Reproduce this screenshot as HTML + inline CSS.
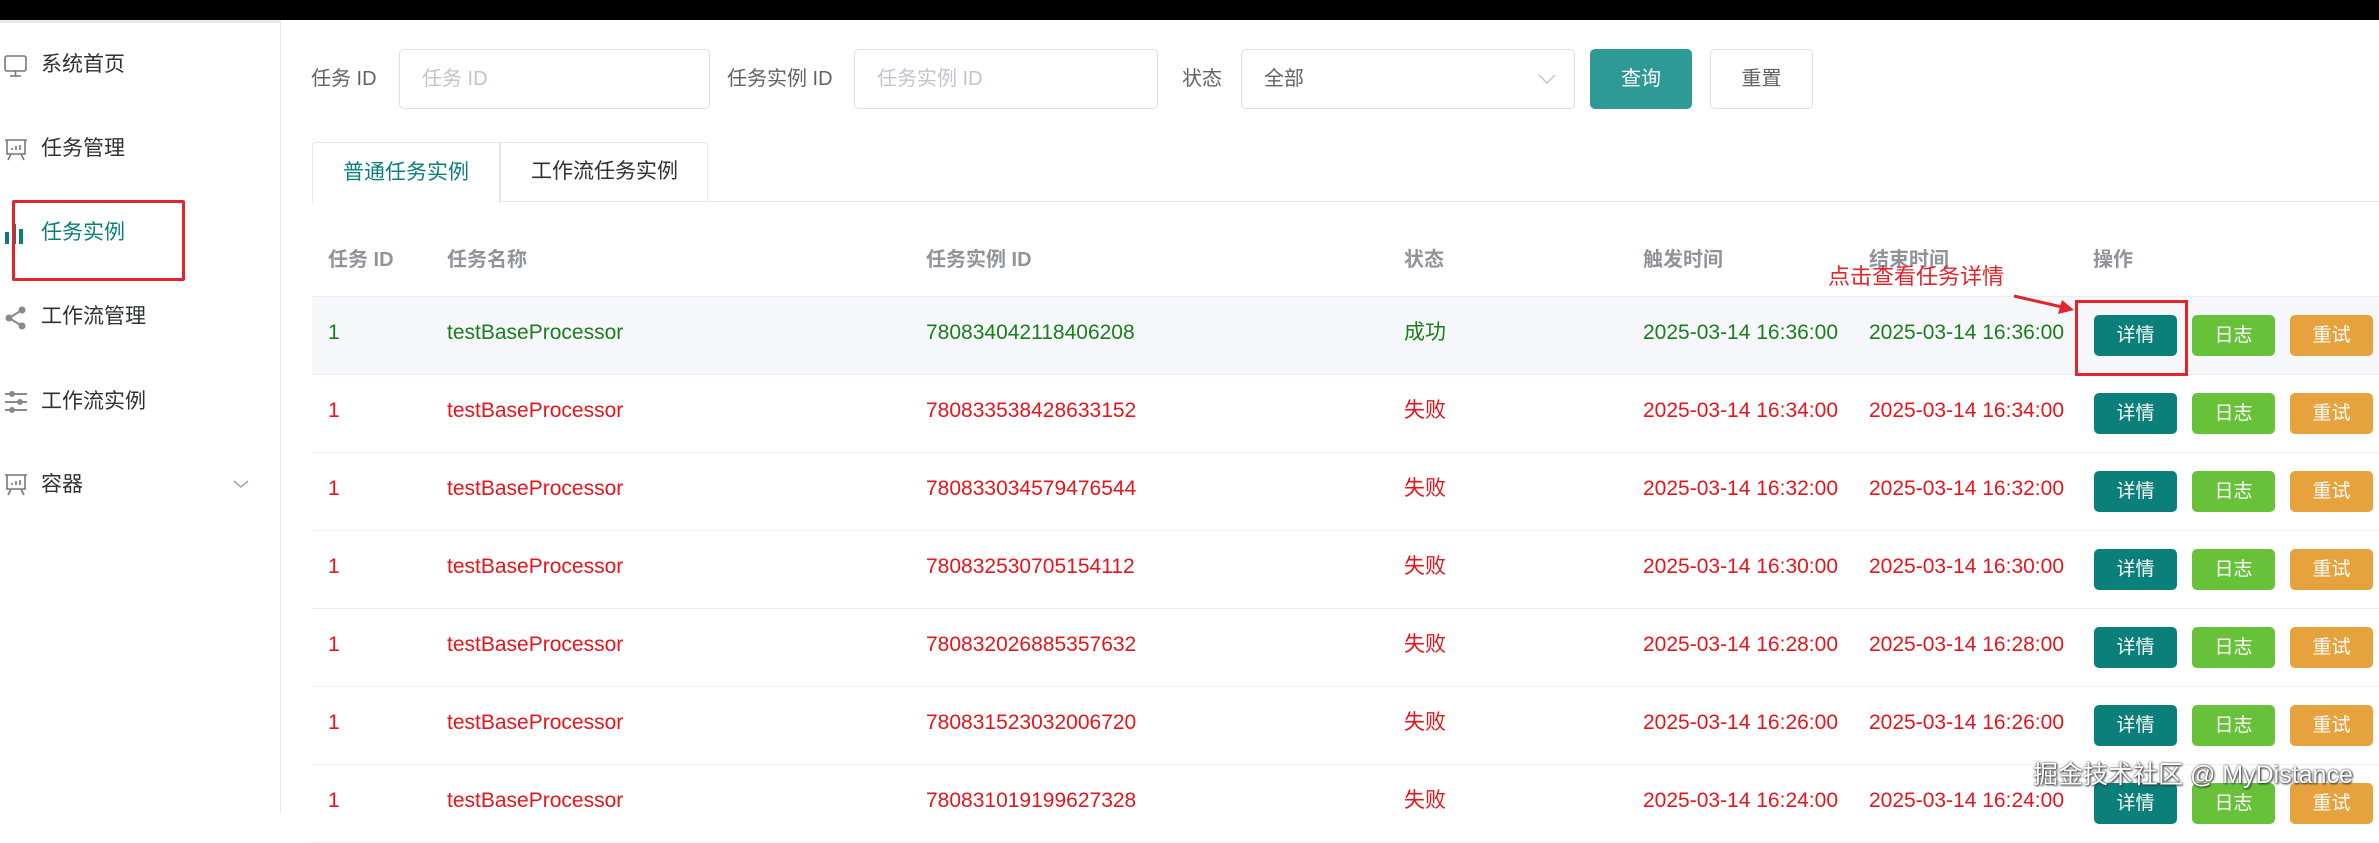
<!DOCTYPE html>
<html><head><meta charset="utf-8"><style>
*{margin:0;padding:0;box-sizing:border-box}
body{width:2379px;height:812px;overflow:hidden;background:#fff;font-family:"Liberation Sans","Noto Sans CJK SC",sans-serif;position:relative;color:#606266}
.a{position:absolute}
.top{left:0;top:0;width:2379px;height:20px;background:#000}
.side{left:0;top:20px;width:281px;height:792px;border-right:1px solid #e6e6e6;background:#fff}
.sidebar-top{left:0;top:20px;width:281px;height:3px;background:#e8e8e8}
.mi{left:41px;font-size:21px;color:#303133;line-height:30px}
.ic{left:3px}
.lbl{font-size:20px;color:#606266;line-height:30px}
.inp{border:1px solid #dcdfe6;border-radius:5px;height:60px;top:49px;font-size:20px;color:#c0c4cc;line-height:58px;padding-left:22px}
.btn{border-radius:5px;color:#fff;font-size:19px;text-align:center;line-height:41px;height:41px;width:83px}
.d{background:#0b7f7a}.l{background:#67c23a}.r{background:#e6a23c}
.th{top:245px;font-size:20px;font-weight:bold;color:#909399;line-height:30px}
.row{left:312px;width:2067px;height:78px;border-bottom:1px solid #ebeef5}
.c{font-size:21px;line-height:30px}
.g{color:#1b7d1b}.rd{color:#e8141c}
</style></head><body>
<div class="a top"></div>
<div class="a side"></div>
<div class="a sidebar-top"></div>

<!-- sidebar -->
<svg class="a ic" style="top:53px" width="26" height="26" viewBox="0 0 26 26" fill="none" stroke="#777" stroke-width="1.6"><rect x="2" y="3" width="21" height="15" rx="2"/><path d="M12.5 18v5M7 23h11"/></svg>
<div class="a mi" style="top:50px">系统首页</div>
<svg class="a ic" style="top:137px" width="26" height="26" viewBox="0 0 26 26" fill="none" stroke="#777" stroke-width="1.6"><path d="M2 3h22M4 3v14h18V3M8 17l-3 6M18 17l3 6M9 13v-2M13 13v-4M17 13v-5"/></svg>
<div class="a mi" style="top:134px">任务管理</div>
<svg class="a ic" style="top:221px" width="26" height="26" viewBox="0 0 26 26"><rect x="2" y="11" width="4" height="12" fill="#0b7f7a"/><rect x="9" y="3" width="4" height="20" fill="#0b7f7a"/><rect x="16" y="8" width="4" height="15" fill="#0b7f7a"/></svg>
<div class="a mi" style="top:218px;color:#0b7f7a">任务实例</div>
<div class="a" style="left:12px;top:200px;width:173px;height:81px;border:3px solid #e3242b;border-radius:2px"></div>
<svg class="a ic" style="top:305px" width="26" height="26" viewBox="0 0 26 26" fill="#888"><circle cx="19" cy="5" r="3.5"/><circle cx="6" cy="13" r="3.5"/><circle cx="19" cy="21" r="3.5"/><path d="M19 5L6 13l13 8" stroke="#888" stroke-width="2" fill="none"/></svg>
<div class="a mi" style="top:302px">工作流管理</div>
<svg class="a ic" style="top:389px" width="26" height="26" viewBox="0 0 26 26" stroke="#888" stroke-width="2" fill="#888"><path d="M2 5h22M2 13h22M2 21h22"/><circle cx="9" cy="5" r="2"/><circle cx="17" cy="13" r="2"/><circle cx="9" cy="21" r="2"/></svg>
<div class="a mi" style="top:387px">工作流实例</div>
<svg class="a ic" style="top:472px" width="26" height="26" viewBox="0 0 26 26" fill="none" stroke="#777" stroke-width="1.6"><path d="M2 3h22M4 3v14h18V3M8 17l-3 6M18 17l3 6M9 13v-2M13 13v-4M17 13v-5"/></svg>
<div class="a mi" style="top:470px">容器</div>
<svg class="a" style="left:233px;top:478px" width="16" height="12" viewBox="0 0 16 12" fill="none" stroke="#999" stroke-width="1.4"><path d="M1 3l7 6 7-6"/></svg>

<!-- form -->
<div class="a lbl" style="left:311px;top:64px">任务 ID</div>
<div class="a inp" style="left:399px;width:311px">任务 ID</div>
<div class="a lbl" style="left:727px;top:64px">任务实例 ID</div>
<div class="a inp" style="left:854px;width:304px">任务实例 ID</div>
<div class="a lbl" style="left:1182px;top:64px">状态</div>
<div class="a inp" style="left:1241px;width:334px;color:#606266">全部</div>
<svg class="a" style="left:1538px;top:72px" width="18" height="14" viewBox="0 0 18 14" fill="none" stroke="#c0c4cc" stroke-width="1.4"><path d="M1 3l8 8 8-8"/></svg>
<div class="a" style="left:1590px;top:49px;width:102px;height:60px;border-radius:5px;background:#2e9a95;color:#fff;font-size:20px;text-align:center;line-height:60px">查询</div>
<div class="a" style="left:1710px;top:49px;width:103px;height:60px;border-radius:5px;border:1px solid #dcdfe6;color:#606266;font-size:20px;text-align:center;line-height:58px">重置</div>

<!-- tabs -->
<div class="a" style="left:312px;top:201px;width:2067px;height:1px;background:#e4e7ed"></div>
<div class="a" style="left:312px;top:142px;width:396px;height:60px;border:1px solid #e4e7ed;border-bottom:none;border-radius:4px 4px 0 0"></div>
<div class="a" style="left:312px;top:142px;width:188px;height:61px;background:#fff;border:1px solid #e4e7ed;border-bottom:none;border-radius:4px 0 0 0;color:#0b7f7a;font-size:21px;text-align:center;line-height:60px">普通任务实例</div>
<div class="a" style="left:500px;top:142px;width:208px;height:60px;border-left:1px solid #e4e7ed;color:#303133;font-size:21px;text-align:center;line-height:60px">工作流任务实例</div>

<!-- table header -->
<div class="a th" style="left:328px">任务 ID</div>
<div class="a th" style="left:447px">任务名称</div>
<div class="a th" style="left:926px">任务实例 ID</div>
<div class="a th" style="left:1404px">状态</div>
<div class="a th" style="left:1643px">触发时间</div>
<div class="a th" style="left:1869px">结束时间</div>
<div class="a th" style="left:2093px">操作</div>
<div class="a" style="left:312px;top:296px;width:2067px;height:1px;background:#ebeef5"></div>

<div class="a row" style="top:297px;background:#f5f7fa"></div>
<div class="a row" style="top:375px"></div>
<div class="a row" style="top:453px"></div>
<div class="a row" style="top:531px"></div>
<div class="a row" style="top:609px"></div>
<div class="a row" style="top:687px"></div>
<div class="a row" style="top:765px"></div>

<div id="rows"></div>
<script>
var data=[["780834042118406208","成功","36",1],["780833538428633152","失败","34",0],["780833034579476544","失败","32",0],["780832530705154112","失败","30",0],["780832026885357632","失败","28",0],["780831523032006720","失败","26",0],["780831019199627328","失败","24",0]];
var h="";
data.forEach(function(d,i){
 var y=297+i*78, ty=y+21, by=y+18, cl=d[3]?"g":"rd", t="2025-03-14 16:"+d[2]+":00";
 h+='<div class="a c '+cl+'" style="left:328px;top:'+ty+'px">1</div>';
 h+='<div class="a c '+cl+'" style="left:447px;top:'+ty+'px">testBaseProcessor</div>';
 h+='<div class="a c '+cl+'" style="left:926px;top:'+ty+'px">'+d[0]+'</div>';
 h+='<div class="a c '+cl+'" style="left:1404px;top:'+ty+'px">'+d[1]+'</div>';
 h+='<div class="a c '+cl+'" style="left:1643px;top:'+ty+'px">'+t+'</div>';
 h+='<div class="a c '+cl+'" style="left:1869px;top:'+ty+'px">'+t+'</div>';
 h+='<div class="a btn d" style="left:2094px;top:'+by+'px">详情</div>';
 h+='<div class="a btn l" style="left:2192px;top:'+by+'px">日志</div>';
 h+='<div class="a btn r" style="left:2290px;top:'+by+'px">重试</div>';
});
document.getElementById("rows").innerHTML=h;
</script>

<!-- annotation -->
<div class="a" style="left:1828px;top:262px;font-size:22px;color:#e3242b;line-height:30px">点击查看任务详情</div>
<svg class="a" style="left:2010px;top:290px" width="70" height="30" viewBox="0 0 70 30"><path d="M4 6L52 17" stroke="#e3242b" stroke-width="3"/><path d="M64 20L48 24L52 10Z" fill="#e3242b"/></svg>
<div class="a" style="left:2075px;top:300px;width:113px;height:76px;border:3px solid #e3242b"></div>

<div class="a" style="left:2033px;top:760px;font-size:25px;color:#fff;line-height:30px;text-shadow:0 0 2px #333,1px 1px 2px #333;white-space:nowrap">掘金技术社区 @ MyDistance</div>
</body></html>
